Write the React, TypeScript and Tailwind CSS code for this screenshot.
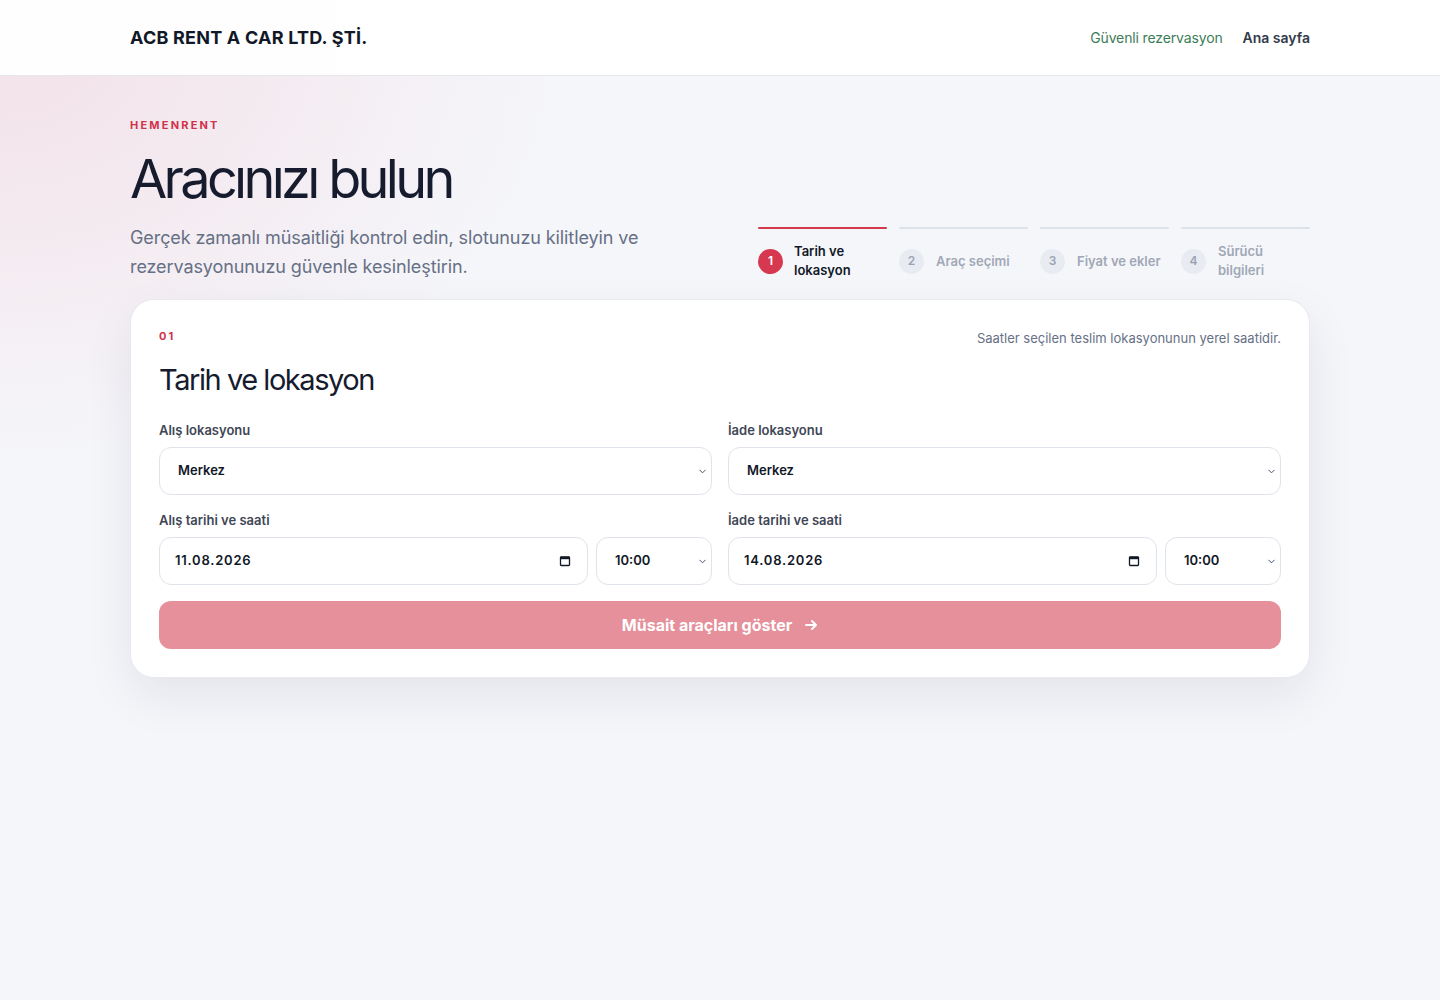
import React from "react";

const Chevron = () => (
  <svg width="9" height="9" viewBox="0 0 10 10" fill="none" className="text-slate-600">
    <path d="M2 3.5 L5 6.5 L8 3.5" stroke="currentColor" strokeWidth="1.1" strokeLinecap="round" strokeLinejoin="round" />
  </svg>
);

const Calendar = () => (
  <svg width="12" height="12" viewBox="0 0 12 12" fill="none">
    <rect x="1.5" y="1.8" width="9" height="8.7" rx="0.8" stroke="#111827" strokeWidth="1.3" />
    <rect x="1.5" y="1.8" width="9" height="2.4" fill="#111827" />
  </svg>
);

function SelectBox({ value, className = "" }: { value: string; className?: string }) {
  return (
    <div className={`h-[48px] rounded-[12px] border border-[#dfe3ea] bg-white flex items-center justify-between pl-[18px] pr-[4px] ${className}`}>
      <span className="text-[13px] font-semibold text-[#111827]">{value}</span>
      <Chevron />
    </div>
  );
}

function DateBox({ value }: { value: string }) {
  return (
    <div className="flex-1 h-[48px] rounded-[12px] border border-[#dfe3ea] bg-white flex items-center justify-between pl-[15px] pr-[16px]">
      <span className="text-[13px] font-semibold tracking-[0.06em] text-[#111827]">{value}</span>
      <Calendar />
    </div>
  );
}

function Step({ n, label, active }: { n: number; label: React.ReactNode; active?: boolean }) {
  return (
    <div className="flex-1 flex flex-col">
      <div className={`h-[2px] rounded-full ${active ? "bg-[#d33a4e]" : "bg-[#dde1e8]"}`} />
      <div className={`flex items-center mt-[13px] min-h-[38px] ${active ? "gap-[11px]" : "gap-[12px]"}`}>
        <div
          className={`w-[25px] h-[25px] rounded-full flex items-center justify-center text-[12px] font-semibold shrink-0 ${
            active ? "bg-[#d6394f] text-white" : "bg-[#e8ebf1] text-[#9aa3b2]"
          }`}
        >
          {n}
        </div>
        <div className={`text-[13px] font-semibold leading-[19px] ${active ? "text-[#111827]" : "text-[#a0a8b6]"}`}>{label}</div>
      </div>
    </div>
  );
}

export default function App() {
  return (
    <div
      className="min-h-[1000px] bg-[#f5f6fa] bg-[radial-gradient(ellipse_560px_420px_at_0px_40px,rgba(226,80,110,0.13),rgba(226,80,110,0)_100%)]"
      style={{ fontFamily: "Inter, 'Noto Sans', sans-serif" }}
    >
      <header className="h-[76px] bg-white/95 border-b border-[#e6e8ee]">
        <div className="max-w-[1180px] mx-auto h-full flex items-center justify-between">
          <div className="text-[18px] font-bold tracking-[0.012em] text-[#111827]">ACB RENT A CAR LTD. ŞTİ.</div>
          <nav className="flex items-center gap-[20px] text-[14px]">
            <span className="text-[#3b7d58] tracking-[-0.01em]">Güvenli rezervasyon</span>
            <span className="font-semibold text-[#333b4a]">Ana sayfa</span>
          </nav>
        </div>
      </header>

      <main className="max-w-[1180px] mx-auto pt-[43px]">
        <div className="text-[11px] leading-[12px] font-bold tracking-[0.2em] text-[#d0334a]">HEMENRENT</div>
        <div className="flex items-end justify-between">
          <div>
            <h1 className="mt-[18px] text-[54px] leading-[60px] font-normal tracking-[-0.068em] text-[#161b2e]">Aracınızı bulun</h1>
            <p className="mt-[14px] text-[18px] leading-[29px] text-[#667085] max-w-[530px] tracking-[-0.005em]">
              Gerçek zamanlı müsaitliği kontrol edin, slotunuzu kilitleyin ve rezervasyonunuzu güvenle kesinleştirin.
            </p>
          </div>
          <div className="w-[552px] flex gap-[12px] mb-[1px]">
            <Step n={1} active label={<>Tarih ve<br />lokasyon</>} />
            <Step n={2} label="Araç seçimi" />
            <Step n={3} label="Fiyat ve ekler" />
            <Step n={4} label={<>Sürücü<br />bilgileri</>} />
          </div>
        </div>

        <section className="mt-[18px] rounded-[24px] bg-white border border-[#e8eaf0] shadow-[0_18px_48px_rgba(20,28,50,0.08)] px-[28px] pt-[30px] pb-[28px]">
          <div className="flex justify-between items-start">
            <div className="text-[11px] leading-[12px] font-bold tracking-[0.2em] text-[#d0334a]">01</div>
            <div className="text-[13px] leading-[16px] text-[#667085]">Saatler seçilen teslim lokasyonunun yerel saatidir.</div>
          </div>
          <h2 className="mt-[16px] text-[29px] leading-[36px] tracking-[-0.05em] text-[#161b2e]">Tarih ve lokasyon</h2>

          <div className="mt-[24px] grid grid-cols-2 gap-x-[16px]">
            <div>
              <div className="text-[13px] leading-[16px] font-semibold text-[#3f4756] mb-[9px]">Alış lokasyonu</div>
              <SelectBox value="Merkez" />
            </div>
            <div>
              <div className="text-[13px] leading-[16px] font-semibold text-[#3f4756] mb-[9px]">İade lokasyonu</div>
              <SelectBox value="Merkez" />
            </div>
            <div className="mt-[17px]">
              <div className="text-[13px] leading-[16px] font-semibold text-[#3f4756] mb-[9px]">Alış tarihi ve saati</div>
              <div className="flex gap-[8px]">
                <DateBox value="11.08.2026" />
                <SelectBox value="10:00" className="w-[116px]" />
              </div>
            </div>
            <div className="mt-[17px]">
              <div className="text-[13px] leading-[16px] font-semibold text-[#3f4756] mb-[9px]">İade tarihi ve saati</div>
              <div className="flex gap-[8px]">
                <DateBox value="14.08.2026" />
                <SelectBox value="10:00" className="w-[116px]" />
              </div>
            </div>
          </div>

          <button className="mt-[16px] w-full h-[48px] rounded-[12px] bg-[#e5909b] text-white text-[16px] font-bold flex items-center justify-center gap-[12px]">
            <span>Müsait araçları göster</span>
            <svg width="14" height="14" viewBox="0 0 14 14" fill="none">
              <path d="M2 7 H12 M8 3 L12 7 L8 11" stroke="white" strokeWidth="2" strokeLinecap="round" strokeLinejoin="round" />
            </svg>
          </button>
        </section>
      </main>
    </div>
  );
}
